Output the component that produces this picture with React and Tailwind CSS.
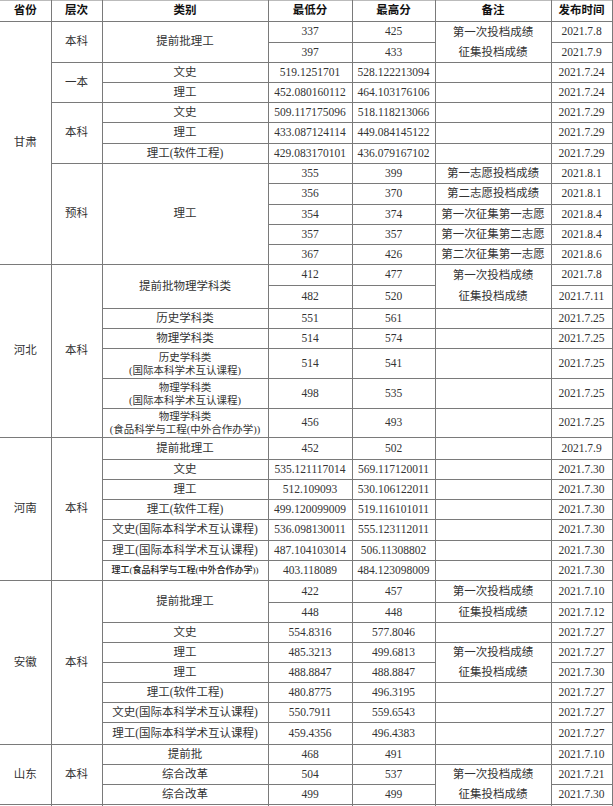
import React from 'react'

const headers = ['省份', '层次', '类别', '最低分', '最高分', '备注', '发布时间']

// each row: [height, cells...]; a cell is a string or { t, rs, small, two, noTop }
const rows = [
  [21, { t: '甘肃', rs: 12 }, { t: '本科', rs: 2 }, { t: '提前批理工', rs: 2 }, '337', '425', '第一次投档成绩', '2021.7.8'],
  [20, '397', '433', { t: '征集投档成绩', noTop: true }, '2021.7.9'],
  [20, { t: '一本', rs: 2 }, '文史', '519.1251701', '528.122213094', '', '2021.7.24'],
  [20, '理工', '452.080160112', '464.103176106', '', '2021.7.24'],
  [20, { t: '本科', rs: 3 }, '文史', '509.117175096', '518.118213066', '', '2021.7.29'],
  [21, '理工', '433.087124114', '449.084145122', '', '2021.7.29'],
  [20, '理工(软件工程)', '429.083170101', '436.079167102', '', '2021.7.29'],
  [20, { t: '预科', rs: 5 }, { t: '理工', rs: 5 }, '355', '399', '第一志愿投档成绩', '2021.8.1'],
  [21, '356', '370', '第二志愿投档成绩', '2021.8.1'],
  [20, '354', '374', '第一次征集第一志愿', '2021.8.4'],
  [20, '357', '357', '第一次征集第二志愿', '2021.8.4'],
  [20, '367', '426', '第二次征集第一志愿', '2021.8.6'],

  [21, { t: '河北', rs: 7 }, { t: '本科', rs: 7 }, { t: '提前批物理学科类', rs: 2 }, '412', '477', '第一次投档成绩', '2021.7.8'],
  [23, '482', '520', { t: '征集投档成绩', noTop: true }, '2021.7.11'],
  [20, '历史学科类', '551', '561', '', '2021.7.25'],
  [20, '物理学科类', '514', '574', '', '2021.7.25'],
  [30, { t: '历史学科类', t2: '(国际本科学术互认课程)' }, '514', '541', '', '2021.7.25'],
  [30, { t: '物理学科类', t2: '(国际本科学术互认课程)' }, '498', '535', '', '2021.7.25'],
  [29, { t: '物理学科类', t2: '(食品科学与工程(中外合作办学))' }, '456', '493', '', '2021.7.25'],

  [22, { t: '河南', rs: 7 }, { t: '本科', rs: 7 }, '提前批理工', '452', '502', '', '2021.7.9'],
  [20, '文史', '535.121117014', '569.117120011', '', '2021.7.30'],
  [20, '理工', '512.109093', '530.106122011', '', '2021.7.30'],
  [20, '理工(软件工程)', '499.120099009', '519.116101011', '', '2021.7.30'],
  [21, '文史(国际本科学术互认课程)', '536.098130011', '555.123112011', '', '2021.7.30'],
  [20, '理工(国际本科学术互认课程)', '487.104103014', '506.11308802', '', '2021.7.30'],
  [20, { t: '理工(食品科学与工程(中外合作办学))', small: true }, '403.118089', '484.123098009', '', '2021.7.30'],

  [22, { t: '安徽', rs: 8 }, { t: '本科', rs: 8 }, { t: '提前批理工', rs: 2 }, '422', '457', '第一次投档成绩', '2021.7.10'],
  [20, '448', '448', '征集投档成绩', '2021.7.12'],
  [20, '文史', '554.8316', '577.8046', '', '2021.7.27'],
  [20, '理工', '485.3213', '499.6813', '第一次投档成绩', '2021.7.27'],
  [20, '理工', '488.8847', '488.8847', { t: '征集投档成绩', noTop: true }, '2021.7.30'],
  [20, '理工(软件工程)', '480.8775', '496.3195', '', '2021.7.27'],
  [20, '文史(国际本科学术互认课程)', '550.7911', '559.6543', '', '2021.7.27'],
  [22, '理工(国际本科学术互认课程)', '459.4356', '496.4383', '', '2021.7.27'],

  [20, { t: '山东', rs: 3 }, { t: '本科', rs: 3 }, '提前批', '468', '491', '', '2021.7.10'],
  [20, '综合改革', '504', '537', '第一次投档成绩', '2021.7.21'],
  [20, '综合改革', '499', '499', { t: '征集投档成绩', noTop: true }, '2021.7.30'],
  [20, '', '', '', '', '', '', ''],
]

const Cell = ({ c, first }) => {
  const cell = typeof c === 'string' ? { t: c } : c
  return (
    <td
      rowSpan={cell.rs}
      className={
        'border border-[#7a7a7a] p-0 text-center align-middle ' +
        (first ? '[border-left-style:hidden] ' : '') +
        (cell.noTop ? '[border-top-style:hidden] ' : '') +
        (cell.small ? 'text-[9px] font-medium text-[#222]' : cell.t2 ? 'text-[10.5px] leading-[13px]' : 'text-[11.5px] leading-none')
      }
    >
      {cell.t}
      {cell.t2 && (
        <>
          <br />
          {cell.t2}
        </>
      )}
    </td>
  )
}

const App = () => {
  return (
    <div className="bg-white min-h-screen w-[613px] overflow-hidden">
      <table className="w-[612px] table-fixed border-collapse text-[#333] font-['Liberation_Serif','Noto_Sans_CJK_SC',serif]">
        <colgroup>
          <col className="w-[51px]" />
          <col className="w-[51px]" />
          <col className="w-[166px]" />
          <col className="w-[84px]" />
          <col className="w-[83px]" />
          <col className="w-[116px]" />
          <col className="w-[61px]" />
        </colgroup>
        <thead>
          <tr className="h-[21px]">
            {headers.map((h, i) => (
              <th
                key={h}
                className={
                  'border border-[#7a7a7a] border-t-[#bbb] p-0 text-center align-middle text-[11.5px] leading-none font-bold text-[#111] font-[\'Noto_Sans_CJK_SC\',sans-serif] ' +
                  (i === 0 ? '[border-left-style:hidden]' : '')
                }
              >
                {h}
              </th>
            ))}
          </tr>
        </thead>
        <tbody>
          {rows.map(([h, ...cells], i) => {
            // the province column only starts on rows that hold seven cells
            const hasFirst = cells.length === 7
            return (
              <tr key={i} style={{ height: h }}>
                {cells.map((c, j) => (
                  <Cell key={j} c={c} first={hasFirst && j === 0} />
                ))}
              </tr>
            )
          })}
        </tbody>
      </table>
    </div>
  )
}

export default App
